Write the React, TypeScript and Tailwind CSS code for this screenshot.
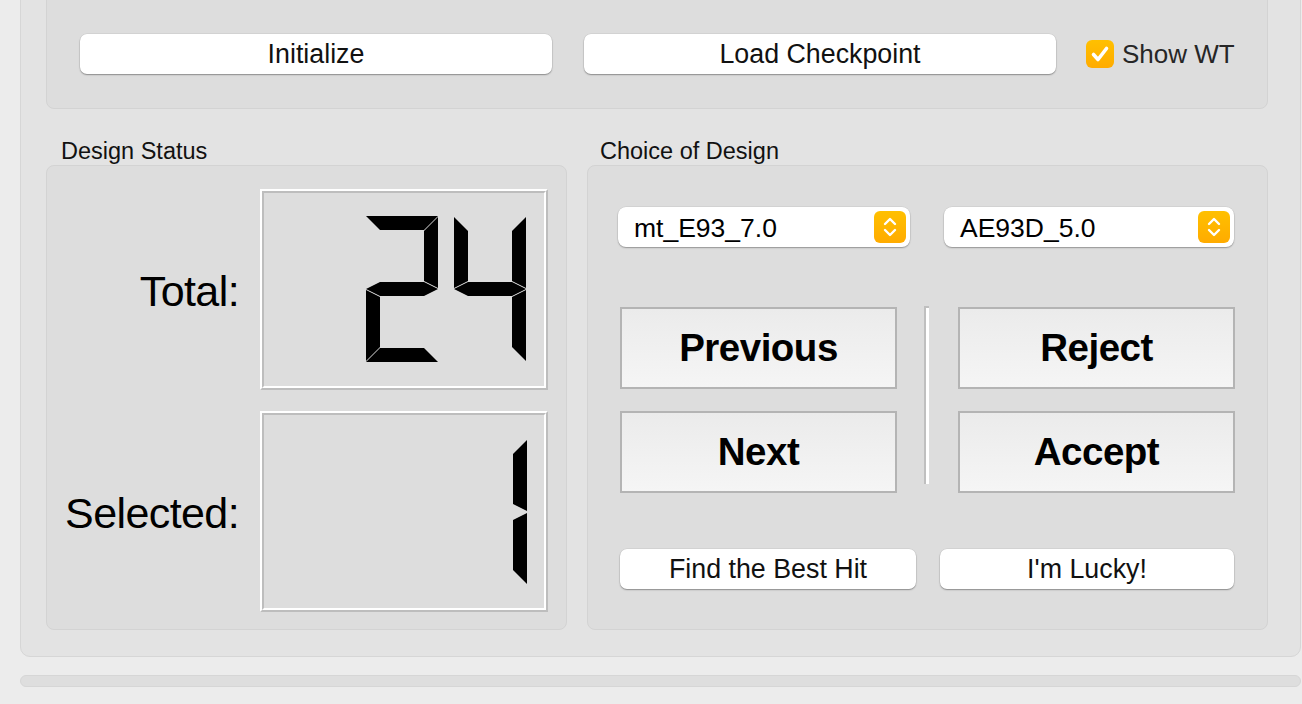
import React from "react";

const SEGS: Record<string, string> = {
  a: "0,0 72,0 58,14 14,14",
  f: "0,1 14,15 14,65 0,72",
  b: "72,1 72,72 58,65 58,15",
  g: "0,73 14,66 58,66 72,73 58,80 14,80",
  e: "0,74 14,81 14,131 0,145",
  c: "72,74 72,145 58,131 58,81",
  d: "0,146 14,132 58,132 72,146",
};
const DIGITS: Record<string, string[]> = {
  "1": ["b", "c"],
  "2": ["a", "b", "g", "e", "d"],
  "4": ["f", "b", "g", "c"],
};

function Digit({ ch, x, y }: { ch: string; x: number; y: number }) {
  return (
    <g transform={`translate(${x},${y})`}>
      {(DIGITS[ch] || []).map((s) => (
        <polygon key={s} points={SEGS[s]} fill="#000" />
      ))}
    </g>
  );
}

function Lcd({ digits, y }: { digits: { ch: string; x: number }[]; y: number }) {
  return (
    <div className="w-[288px] h-[201px] border-2 border-t-white border-l-white border-r-[#bdbdbd] border-b-[#bdbdbd]">
      <div className="w-full h-full border-2 border-t-[#bdbdbd] border-l-[#bdbdbd] border-r-white border-b-white">
        <svg width="280" height="193" viewBox="0 0 280 193" className="block">
          {digits.map((d, i) => (
            <Digit key={i} ch={d.ch} x={d.x - 4} y={y - 4} />
          ))}
        </svg>
      </div>
    </div>
  );
}

function WhiteButton({ label, w }: { label: string; w: string }) {
  return (
    <div
      className={`${w} h-[40px] bg-white rounded-[7px] shadow-[0_1px_1.5px_rgba(0,0,0,0.35),0_0_0_0.5px_rgba(0,0,0,0.08)] flex items-center justify-center text-[26.8px] text-[#111]`}
    >
      {label}
    </div>
  );
}

function BigButton({ label }: { label: string }) {
  return (
    <div className="w-[277px] h-[82px] border-2 border-[#b4b4b4] bg-gradient-to-b from-[#ebebeb] to-[#f5f5f5] flex items-center justify-center text-[38.5px] font-bold tracking-[-0.5px] text-black">
      {label}
    </div>
  );
}

function Combo({ label, w }: { label: string; w: string }) {
  return (
    <div
      className={`${w} h-[40px] bg-white rounded-[8px] shadow-[0_1px_1.5px_rgba(0,0,0,0.3),0_0_0_0.5px_rgba(0,0,0,0.08)] flex items-center pl-[16px] pr-[4px]`}
    >
      <span className="flex-1 pt-[3px] text-[26.5px] text-black">{label}</span>
      <div className="w-[32px] h-[32px] rounded-[6px] bg-gradient-to-b from-[#ffc000] to-[#ffab00] flex items-center justify-center">
        <svg width="32" height="32" viewBox="0 0 32 32">
          <path d="M11 13 L16 8 L21 13" stroke="white" strokeWidth="2.4" fill="none" strokeLinecap="round" strokeLinejoin="round" />
          <path d="M11 19 L16 24 L21 19" stroke="white" strokeWidth="2.4" fill="none" strokeLinecap="round" strokeLinejoin="round" />
        </svg>
      </div>
    </div>
  );
}

export default function App() {
  return (
    <div className="w-[1302px] h-[704px] bg-[#ececec] overflow-hidden font-['Liberation_Sans',Arial,sans-serif]">
      <div className="ml-[20px] w-[1281px] h-[677px] -mt-[20px] bg-[#e3e3e3] border border-[#d6d6d6] rounded-[10px] pl-[25px] pr-[32px]">
        {/* top group */}
        <div className="h-[128px] bg-[#dddddd] border border-[#d3d3d3] rounded-[8px] pt-[52px] pl-[33px] flex items-start">
          <WhiteButton label="Initialize" w="w-[472px]" />
          <div className="ml-[32px]">
            <WhiteButton label="Load Checkpoint" w="w-[472px]" />
          </div>
          <div className="ml-[30px] h-[40px] flex items-center">
            <div className="w-[28px] h-[28px] rounded-[6px] bg-gradient-to-b from-[#ffc000] to-[#ffab00] flex items-center justify-center">
              <svg width="28" height="28" viewBox="0 0 28 28">
                <path d="M7.5 14.5 L12 19.5 L20.5 8.5" stroke="white" strokeWidth="3.6" fill="none" strokeLinecap="round" strokeLinejoin="round" />
              </svg>
            </div>
            <span className="ml-[8px] text-[26px] text-[#262626]">Show WT</span>
          </div>
        </div>

        {/* groups */}
        <div className="flex mt-[28px] gap-[20px]">
          <div className="w-[521px]">
            <div className="h-[28px] leading-[28px] pl-[15px] text-[23.5px] text-[#111]">Design Status</div>
            <div className="h-[465px] bg-[#dddddd] border border-[#d3d3d3] rounded-[8px] pt-[23px] grid grid-cols-[192px_288px] content-start gap-x-[21px] gap-y-[21px] items-center">
              <div className="text-right pt-[3px] text-[43px] tracking-[-0.6px] text-black">Total:</div>
              <Lcd y={27} digits={[{ ch: "2", x: 106 }, { ch: "4", x: 194 }]} />
              <div className="text-right pt-[3px] text-[43px] tracking-[-0.6px] text-black">Selected:</div>
              <Lcd y={28} digits={[{ ch: "1", x: 195 }]} />
            </div>
          </div>
          <div className="w-[681px]">
            <div className="h-[28px] leading-[28px] pl-[13px] text-[23.5px] text-[#111]">Choice of Design</div>
            <div className="h-[465px] bg-[#dddddd] border border-[#d3d3d3] rounded-[8px] pt-[41px]">
              <div className="flex pl-[30px] gap-[34px]">
                <Combo label="mt_E93_7.0" w="w-[292px]" />
                <Combo label="AE93D_5.0" w="w-[290px]" />
              </div>
              <div className="mt-[60px] pl-[32px] flex items-start">
                <div className="flex flex-col gap-[22px]">
                  <BigButton label="Previous" />
                  <BigButton label="Next" />
                </div>
                <div className="ml-[27px] -mt-[1px] w-[5px] h-[178px] border-l-2 border-t-2 border-[#bfbfbf] bg-white" />
                <div className="ml-[29px] flex flex-col gap-[22px]">
                  <BigButton label="Reject" />
                  <BigButton label="Accept" />
                </div>
              </div>
              <div className="mt-[56px] pl-[32px] flex gap-[24px]">
                <WhiteButton label="Find the Best Hit" w="w-[296px]" />
                <WhiteButton label="I'm Lucky!" w="w-[294px]" />
              </div>
            </div>
          </div>
        </div>
      </div>
      <div className="ml-[20px] mt-[18px] w-[1281px] h-[12px] bg-[#dedede] border border-[#d6d6d6] rounded-full" />
    </div>
  );
}
